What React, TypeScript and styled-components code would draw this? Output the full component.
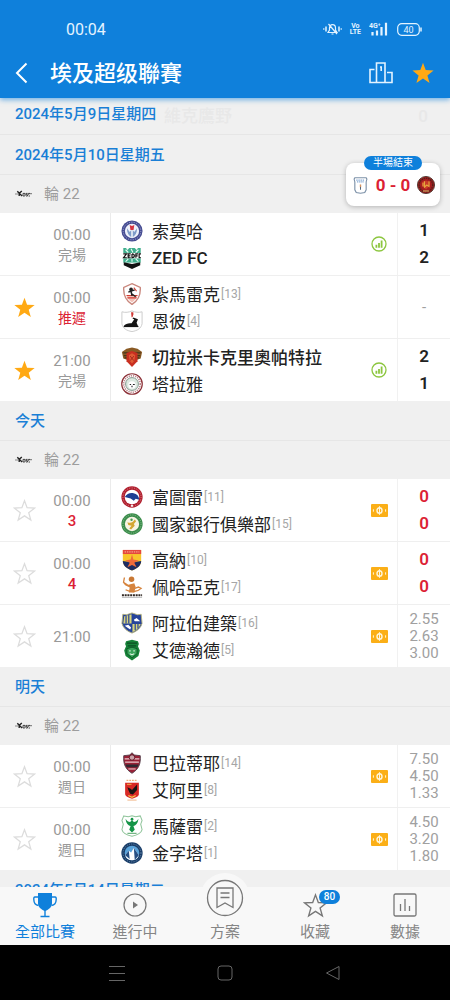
import React from "react";
import styled, { createGlobalStyle } from "styled-components";

const blue = "#0f80db";
const orange = "#ffa914";
const red = "#dc1f35";

const GlobalStyle = createGlobalStyle`
  *, *::before, *::after { box-sizing: border-box; }
  body {
    margin: 0;
    background: #f0f0f0;
    font-family: Roboto, "Noto Sans CJK TC", sans-serif;
    color: #222;
  }
  button {
    padding: 0;
    border: 0;
    background: none;
    font: inherit;
    color: inherit;
    cursor: pointer;
  }
  svg { display: block; flex: none; }
`;

const Screen = styled.div`
  display: flex;
  flex-direction: column;
  height: 100vh;
  background: #f0f0f0;
`;

const Header = styled.header`
  position: relative;
  z-index: 2;
  flex: none;
  background: ${blue};
  color: #fff;
  box-shadow: 0 2px 5px rgba(15, 128, 219, 0.55);
`;

const StatusBar = styled.div`
  display: flex;
  align-items: center;
  justify-content: space-between;
  height: 48px;
  padding: 10px 28px 0 66px;
  font-size: 16px;
  color: #e4f3ff;
`;

const StatusIcons = styled.div`
  display: flex;
  align-items: center;
  gap: 8px;
`;

const VoLte = styled.span`
  display: flex;
  flex-direction: column;
  align-items: center;
  font-size: 7px;
  font-weight: 700;
  line-height: 6px;
`;

const TitleBar = styled.div`
  display: flex;
  align-items: center;
  height: 50px;
  padding: 0 15px 0 14px;
`;

const Title = styled.h1`
  flex: 1;
  margin: 0 0 0 20px;
  padding-top: 2px;
  font-size: 22px;
  line-height: 30px;
  font-weight: 500;
`;

const IconButton = styled.button`
  display: flex;
  align-items: center;
  justify-content: center;
`;

const HeaderActions = styled.div`
  display: flex;
  align-items: center;
  gap: 18px;
`;

const Content = styled.main`
  position: relative;
  flex: 1;
  min-height: 0;
`;

const Scroller = styled.div`
  height: 100%;
  overflow-y: auto;
  scrollbar-width: none;
`;

const DateHeading = styled.h2<{ $pinned?: boolean }>`
  display: flex;
  align-items: center;
  height: ${(p) => (p.$pinned ? 37 : 40)}px;
  margin: 0;
  padding: ${(p) => (p.$pinned ? "0 15px 4px" : "1px 15px 0")};
  border-bottom: 1px solid #e6e6e6;
  font-size: 15px;
  line-height: 20px;
  font-weight: 500;
  color: #1a7fd6;
`;

const PinnedBar = styled.div`
  position: relative;
`;

const Faded = styled.div`
  position: absolute;
  inset: 6px 0 auto 164px;
  display: flex;
  justify-content: space-between;
  padding-right: 22px;
  font-size: 17px;
  line-height: 24px;
  font-weight: 500;
  color: #e8e8e8;
`;

const RoundRow = styled.div`
  display: flex;
  align-items: center;
  gap: 12px;
  height: 38px;
  padding: 0 15px;
  font-size: 15px;
  line-height: 20px;
  color: #9d9d9d;
`;

const MatchList = styled.ul`
  margin: 0;
  padding: 0;
  list-style: none;
  background: #fff;
`;

const MatchRow = styled.li`
  display: grid;
  grid-template-columns: 48px 63px minmax(0, 1fr) 36px 53px;
  min-height: 62px;
  & + & {
    min-height: 63px;
    border-top: 1px solid #efefef;
  }
`;

const Cell = styled.div`
  display: flex;
  flex-direction: column;
  align-items: center;
  justify-content: center;
`;

const TimeCell = styled(Cell)`
  padding: 2px 14px 0 0;
  border-right: 1px solid #ebebeb;
  font-size: 15px;
  line-height: 20px;
  color: #999;
`;

const State = styled.span<{ $tone?: "red" | "minute" }>`
  font-size: ${(p) => (p.$tone === "minute" ? 15 : 14)}px;
  font-weight: ${(p) => (p.$tone === "minute" ? 500 : 400)};
  color: ${(p) => (p.$tone ? red : "#999")};
`;

const Teams = styled.div`
  display: flex;
  flex-direction: column;
  justify-content: center;
  padding-left: 10px;
`;

const Team = styled.div<{ $winner?: boolean }>`
  display: flex;
  align-items: center;
  height: 27px;
  font-size: 17px;
  font-weight: ${(p) => (p.$winner ? 500 : 400)};
  white-space: nowrap;
`;

const TeamName = styled.span`
  margin-left: 9px;
`;

const Rank = styled.span`
  margin-left: 1px;
  font-size: 12px;
  font-weight: 400;
  color: #a6a6a6;
`;

const ResultCell = styled(Cell)`
  border-left: 1px solid #f1f1f1;
`;

const Goals = styled.span<{ $live?: boolean }>`
  font-size: 17px;
  line-height: 27px;
  font-weight: 600;
  color: ${(p) => (p.$live ? red : "#222")};
`;

const Odd = styled.span`
  font-size: 15px;
  line-height: 17px;
  color: #a0a0a0;
`;

const LiveCard = styled.aside`
  position: absolute;
  top: 65px;
  right: 10px;
  z-index: 1;
  display: flex;
  align-items: center;
  justify-content: space-between;
  width: 94px;
  height: 43px;
  padding: 1px 5px 0 6px;
  border-radius: 8px;
  background: #fff;
  box-shadow: 0 1px 5px rgba(0, 0, 0, 0.25);
  font-size: 17px;
  font-weight: 700;
  color: ${red};
  white-space: nowrap;
`;

const LivePill = styled.span`
  position: absolute;
  top: -7px;
  left: 18px;
  right: 18px;
  border-radius: 7px;
  background: ${blue};
  color: #fff;
  font-size: 10px;
  line-height: 14px;
  font-weight: 400;
  text-align: center;
`;

const TabBar = styled.nav`
  position: relative;
  z-index: 2;
  flex: none;
  display: grid;
  grid-template-columns: repeat(5, 1fr);
  height: 58px;
  background: #f8f8f8;
`;

const Tab = styled.button<{ $active?: boolean }>`
  position: relative;
  display: flex;
  flex-direction: column;
  align-items: center;
  justify-content: flex-end;
  gap: 3px;
  padding-bottom: 2px;
  font-size: 15px;
  line-height: 22px;
  color: ${(p) => (p.$active ? blue : "#858585")};
`;

const TabIcon = styled.span`
  display: flex;
  align-items: center;
  justify-content: center;
  height: 26px;
`;

const RaisedIcon = styled.span`
  position: absolute;
  top: -14px;
  left: 50%;
  margin-left: -25px;
  width: 50px;
  height: 50px;
  border-radius: 50%;
  background: #f8f8f8;
  display: flex;
  align-items: center;
  justify-content: center;
`;

const Badge = styled.span`
  position: absolute;
  top: 3px;
  left: 50%;
  margin-left: 4px;
  min-width: 21px;
  border-radius: 7px;
  background: ${blue};
  color: #fff;
  font-size: 10px;
  line-height: 14px;
  font-weight: 500;
  text-align: center;
`;

const SystemNav = styled.footer`
  flex: none;
  display: flex;
  align-items: center;
  justify-content: center;
  gap: 90px;
  height: 55px;
  background: #000;
`;

const STAR = "M12 1.8l2.700 7.300 7.900.4-6.200 4.900 2.200 7.500-6.600-4.300-6.600 4.300 2.200-7.500-6.200-4.900 7.900-.4z";

const Star = ({ on, size = 23, stroke = "#dcdcdc" }: { on?: boolean; size?: number; stroke?: string }) => (
  <svg width={size} height={size} viewBox="0 0 24 24">
    <path d={STAR} fill={on ? orange : "none"} stroke={on ? "none" : stroke} strokeWidth="1.3" />
  </svg>
);

const ChartIcon = () => (
  <svg width="16" height="16" viewBox="0 0 16 16">
    <circle cx="8" cy="8" r="7" fill="none" stroke="#8cc63f" strokeWidth="1.3" />
    <path d="M5.4 8.800v3M8 7v4.800M10.600 4.400v7.400" stroke="#8cc63f" strokeWidth="1.800" />
  </svg>
);

const BillIcon = () => (
  <svg width="17" height="13" viewBox="0 0 17 13">
    <rect width="17" height="13" rx="1" fill="#fbaf17" />
    <ellipse cx="8.5" cy="6.5" rx="2.5" ry="2.8" fill="none" stroke="#fff6dc" strokeWidth="1.4" />
    <path d="M8.5 2.2v8.600M2.400 5.300v2.400M14.600 5.300v2.400" stroke="#fff6dc" strokeWidth="1" />
  </svg>
);

const LeagueMark = () => (
  <svg width="17" height="10" viewBox="0 0 17 10">
    <path d="M0 5h3.200M13.500 4.600H17" stroke="#888" strokeWidth="1.100" />
    <path d="M2.300 2.200l2 2L6.800 2M4.200 3.400v3.600M4.600 4.800l2.600 2.200" fill="none" stroke="#222" strokeWidth="1.400" />
    <path d="M10 7V4.400H8V7h1.800M12.600 4.400H11v1.300h1.500V7H11M15 4.400h-1.500v1.300M13.600 7H15" fill="none" stroke="#444" strokeWidth="1" />
  </svg>
);

const crests: Record<string, React.ReactNode> = {
  smouha: (
    <>
      <circle cx="12" cy="12" r="11.5" fill="#454b91" />
      <circle cx="12" cy="12" r="9.600" fill="none" stroke="#a9afd6" strokeWidth="1" strokeDasharray="1.2 1.4" />
      <circle cx="12" cy="12" r="7.8" fill="#eef1fa" />
      <path d="M6.500 9c0 5 1.800 8.500 5.500 10 3.700-1.500 5.500-5 5.500-10l-3 4-2.500-3-2.500 3z" fill="#7f9cc9" />
      <path d="M12 9v10" stroke="#fff" strokeWidth="1.500" />
      <path d="M9.500 5.500l2.500 1 2.500-1-.8 5.500h-3.400z" fill="#d63542" />
    </>
  ),
  zed: (
    <>
      <path d="M2.500 1h3l1.500 2.400L9 1h6l2 2.400L18.500 1h3v6h-19z" fill="#3fae8c" />
      <path d="M2.500 12h19v5h-19z" fill="#3fae8c" />
      <path d="M5 3l3 3M11 2l2 4M19 3l-3 3M5 16l3-3M12 16v-3M19 16l-3-3" stroke="#e9fff7" strokeWidth="1.200" />
      <path d="M2 6.500h20v6H2z" fill="#fff" />
      <path d="M2.500 7.500H6l-3.200 4.200h3.600M10.600 7.500H7.800v4.200h2.800M7.800 9.600h2.400M12 7.500v4.200c3.400 0 3.400-4.200 0-4.200M18.600 7.500h-2.400v4.200M16.200 9.600h2M21.800 7.500h-2v4.200h2" fill="none" stroke="#111" strokeWidth="1.300" />
      <path d="M3 16.500l9 2 9-2V20l-9 4-9-4z" fill="#111" />
    </>
  ),
  zamalek: (
    <>
      <path d="M12 .8l9 4c.6 8-2.400 14.600-9 18.600C5.400 19.400 2.400 12.800 3 4.800z" fill="#fff" stroke="#c9877d" strokeWidth="1.500" />
      <path d="M6 14h12c-1 3-3.400 5.600-6 7.200C9.400 19.600 7 17 6 14z" fill="#f2c2b8" />
      <path d="M6 13.600h12M7 16.200h10" stroke="#d23a30" strokeWidth="1.200" />
      <circle cx="11" cy="7" r="2" fill="#222" />
      <path d="M8 10l7-2.500M11 9l1 5M12 12l4 3" stroke="#222" strokeWidth="1.600" />
      <path d="M14 5l3 4" stroke="#cf4036" strokeWidth="1.200" />
    </>
  ),
  enppi: (
    <>
      <path d="M1 2c4 1 7.500.6 11-1 3.500 1.600 7 2 11 1v13c-1 5-5 7.600-11 8.500C6 22.600 2 20 1 15z" fill="#fff" stroke="#c8c8c8" strokeWidth="1" />
      <path d="M11 2.500h2.500v2.500l-1 3h-1z" fill="#d13a36" />
      <path d="M3 17.500c2-2.500 5-3.500 8.500-3l3-4.500-2-.5 1-1.200 5 1.700-1.500 4 1.500 3.500z" fill="#151515" />
      <path d="M3 18h16" stroke="#151515" strokeWidth="1.300" />
    </>
  ),
  cleopatra: (
    <>
      <path d="M1 6.500l5-3.500 6-1.500L18 3l5 3.500-1.500 7-5.500 2H8l-5.500-2z" fill="#8a5a24" />
      <path d="M2.500 7.500h19M3 10.500h18M4 13h16" stroke="#46351d" strokeWidth="1.200" />
      <path d="M6 7.500l6-2 6 2v9L12 23l-6-6.500z" fill="#c92f21" />
      <path d="M8.500 10l3.500-2 3.500 2-1 6-2.500 3-2.500-3z" fill="#e05a34" />
      <path d="M10 11l4 5M14 11l-4 5" stroke="#a3261b" strokeWidth="1" />
    </>
  ),
  talaea: (
    <>
      <circle cx="12" cy="12" r="11.200" fill="#fff" stroke="#8b2f36" strokeWidth="1.300" />
      <circle cx="12" cy="12" r="9" fill="none" stroke="#b98488" strokeWidth="1.800" strokeDasharray="1.300 1.100" />
      <circle cx="12" cy="12" r="7" fill="#dce9e0" stroke="#7b8f85" strokeWidth="1" />
      <circle cx="12" cy="13" r="4" fill="#fff" />
      <path d="M9.500 12.500h1.500M13 12.500h2M12 14v1.500" stroke="#222" strokeWidth="1.200" fill="none" />
    </>
  ),
  future: (
    <>
      <circle cx="12" cy="12" r="11.600" fill="#b01f2e" />
      <circle cx="12" cy="12" r="9.900" fill="none" stroke="#dd8a92" strokeWidth="1" strokeDasharray="1.200 1.500" />
      <circle cx="12" cy="12" r="8" fill="#fff" />
      <path d="M4.200 12c2-3.500 5.800-4.800 9.500-4 3.500.7 6 3 6.200 7l-3.900-1-2 2-3.500-2.500z" fill="#1e3f93" />
      <path d="M11 20.500h2v2h-2z" fill="#fff" />
    </>
  ),
  bank: (
    <>
      <circle cx="12" cy="12" r="11.600" fill="#3a8c4a" />
      <circle cx="12" cy="12" r="9.900" fill="none" stroke="#8fc297" strokeWidth="1" strokeDasharray="1.200 1.400" />
      <circle cx="12" cy="12" r="7.800" fill="#f7f4e4" />
      <path d="M7 10c2 1 4 1 6-.5L15 7l1.500 2-2.500 3 1 2-4 4-2-1 2.500-3L8 13z" fill="#d3a632" />
      <circle cx="11.500" cy="7.300" r="1.300" fill="#4a9a52" />
    </>
  ),
  gouna: (
    <>
      <path d="M2 1h20v12c0 5-4 8-10 10.500C6 21 2 18 2 13z" fill="#f8c62b" />
      <path d="M2 1h20v4.500H2z" fill="#e5483d" />
      <path d="M2 13l5 1 5-2 5 2 5-1c0 5-4 8-10 10.500C6 21 2 18 2 13z" fill="#1d2c62" />
      <path d="M12 6l1.500 5.500 6 1-5 2.500 2.500 5L12 17.500 7 20l2.500-5-5-2.500 6-1z" fill="#ef6b3a" />
      <path d="M4 3.200h16" stroke="#f7c4a5" strokeWidth="1" strokeDasharray="1.500 1" />
    </>
  ),
  pharco: (
    <>
      <circle cx="11.500" cy="3.500" r="3" fill="#c97834" />
      <path d="M4.500 1.500l-1 5L8 9.500 14.500 8l1.500 4-1.500 6H8.500l1-5.500-5-2.500L2 7l1-5.500z" fill="#d6843e" />
      <path d="M5 15c6 3 13 2.500 17-1.500l-3-1.500-4 1.500" fill="none" stroke="#d6843e" strokeWidth="1.500" />
      <path d="M1 21h22" stroke="#332a25" strokeWidth="2.200" strokeDasharray="2.200 .8" />
      <path d="M1 23.500h22" stroke="#aaa" strokeWidth=".8" />
    </>
  ),
  arab: (
    <>
      <path d="M2 2.500l4 .5 6-2 6 2 4-.5 1 10c-1.500 5-5.500 8.500-11 10.500C6.500 21 2.500 17.500 1 12.500z" fill="#26439a" stroke="#b6b27b" strokeWidth="1" />
      <path d="M3.500 4.500l8-2v10h-9zM12.500 13h9c-1.500 4-4.500 7-9 9z" fill="#d8d37c" />
      <path d="M5.500 4v8.500M8.500 3v9.500M15.500 13v7M18.500 13v5" stroke="#26439a" strokeWidth="1.300" />
      <path d="M14 8.500l3-2 4 3.500h-6zM4 15l4-1 3 3-1 2z" fill="#fff" />
    </>
  ),
  ittihad: (
    <>
      <path d="M5.500 2.500L12 .8l6.500 1.700 1 3-1 2.500 2 4.500-1.500 6-7 5-7-5-1.500-6 2-4.500-1-2.500z" fill="#168238" />
      <path d="M6.500 4.500h11M7.500 7.500h9" stroke="#0d4f22" strokeWidth="1.600" />
      <path d="M6.500 10.500l5.500-1.500 5.500 1.500v5.500L12 20.500 6.500 16z" fill="#39a45a" stroke="#0d5a26" strokeWidth="1" />
      <path d="M9 13h1.500M13.500 13H15M9.500 16c1.600 1.300 3.400 1.300 5 0" stroke="#e1f3e4" strokeWidth="1.200" fill="none" />
    </>
  ),
  baladiyat: (
    <>
      <path d="M12 .8l2.500 2.500L21 4c.8 9-2 15-9 19.200C5 19 2.200 13 3 4l6.500-.7z" fill="#9a2036" stroke="#54404a" strokeWidth="1" />
      <path d="M4 7.500h16M4.500 11h15" stroke="#e9c9cd" strokeWidth="1.300" />
      <circle cx="12" cy="6" r="3" fill="#c9a3a9" stroke="#5c1020" strokeWidth="1" />
      <path d="M4.800 13.500h14.400l-1.400 3H6.200z" fill="#2d2831" />
      <path d="M8 18.500h8" stroke="#e7bcc1" strokeWidth="1.300" />
    </>
  ),
  ahly: (
    <>
      <path d="M6 1.500h12" stroke="#efb27c" strokeWidth="1.500" strokeDasharray="2 1" />
      <path d="M4.500 4h15v12.500c0 2-3 3.500-7.500 5-4.500-1.500-7.500-3-7.500-5z" fill="#d82a26" />
      <path d="M7 9l3.500 1.500L12 12l5.500-6v6L13 17l-3-1-2-4z" fill="#1c1614" />
      <path d="M8 18l4 2 4-2" stroke="#f4c64b" strokeWidth="1.300" fill="none" />
      <path d="M6.500 5.800h5" stroke="#f4c64b" strokeWidth="1" />
      <path d="M7 23h10" stroke="#f0b07d" strokeWidth="1" />
    </>
  ),
  masry: (
    <>
      <path d="M3 1l5 1 4-1.200L16 2l5-1 2 5-1.500 4L23 16c-1 4-5 6-11 7.200C6 22 2 20 1 16l1.500-6L1 6z" fill="#fff" stroke="#8fc49a" strokeWidth="1.100" />
      <path d="M5 4c.5 5 2.500 7 5.500 8L9 16l3 3 3-3-1.500-4c3-1 5-3 5.500-8-1.500 2.500-3 3.500-5 3.500L12 5.500 10 7.500C8 7.500 6.500 6.500 5 4z" fill="#159447" />
      <circle cx="12" cy="4.500" r="1.500" fill="#159447" />
      <path d="M7 20h10" stroke="#63ad75" strokeWidth="1.200" />
    </>
  ),
  pyramids: (
    <>
      <circle cx="12" cy="12" r="11.600" fill="#193d68" />
      <circle cx="12" cy="12" r="9.800" fill="none" stroke="#6f8fb2" strokeWidth="1" strokeDasharray="1.100 1.400" />
      <circle cx="12" cy="12" r="8" fill="#5aa3da" />
      <path d="M4.500 14.500l4-5 2.500 2 3-5 5.500 8c-1 3.500-4 5.500-7.500 5.500s-6.500-2-7.500-5.500z" fill="#fff" />
      <path d="M8.500 9.500l1 9-5-4zM14 6.500l1 13 4.500-5z" fill="#264f83" />
    </>
  ),
  livehome: (
    <>
      <path d="M4 1h16l1 2-1 4v11l-2 4-6 1-6-1-2-4V7L3 3z" fill="#fff" stroke="#7c91a8" strokeWidth="1.600" />
      <path d="M6 4.500h12M7 7h10" stroke="#85a9d4" strokeWidth="1.700" strokeDasharray="2 1" />
      <path d="M12 10.500v4" stroke="#d79560" strokeWidth="2" />
      <path d="M12 14v4" stroke="#55677c" strokeWidth="1.500" />
    </>
  ),
  liveaway: (
    <>
      <circle cx="12" cy="12" r="11.400" fill="#a51d20" stroke="#47362c" strokeWidth="1.200" />
      <circle cx="12" cy="12" r="9" fill="none" stroke="#562019" strokeWidth="2" strokeDasharray="2 1" />
      <path d="M7 8l5-2 5 2v5l-5 5-5-5z" fill="#c93a28" />
      <path d="M10 7v8l3-3 3 2V7M8 9v5" fill="none" stroke="#e5a63d" strokeWidth="1.500" />
      <path d="M8 20h8" stroke="#d7ad62" strokeWidth="1.500" />
    </>
  ),
};

const Crest = ({ id, size = 22 }: { id: string; size?: number }) => (
  <svg width={size} height={size} viewBox="0 0 24 24">
    {crests[id]}
  </svg>
);

type Side = { crest: string; name: string; rank?: number; winner?: boolean };
type Match = {
  time: string;
  state?: string;
  tone?: "red" | "minute";
  star?: "on" | "off";
  sides: [Side, Side];
  extra?: "chart" | "bill";
  goals?: number[];
  live?: boolean;
  odds?: string[];
};

const days: { date: string; matches: Match[] }[] = [
  {
    date: "2024年5月10日星期五",
    matches: [
      { time: "00:00", state: "完場", sides: [{ crest: "smouha", name: "索莫哈" }, { crest: "zed", name: "ZED FC", winner: true }], extra: "chart", goals: [1, 2] },
      { time: "00:00", state: "推遲", tone: "red", star: "on", sides: [{ crest: "zamalek", name: "紮馬雷克", rank: 13 }, { crest: "enppi", name: "恩彼", rank: 4 }] },
      { time: "21:00", state: "完場", star: "on", sides: [{ crest: "cleopatra", name: "切拉米卡克里奧帕特拉", winner: true }, { crest: "talaea", name: "塔拉雅" }], extra: "chart", goals: [2, 1] },
    ],
  },
  {
    date: "今天",
    matches: [
      { time: "00:00", state: "3", tone: "minute", star: "off", sides: [{ crest: "future", name: "富圖雷", rank: 11 }, { crest: "bank", name: "國家銀行俱樂部", rank: 15 }], extra: "bill", goals: [0, 0], live: true },
      { time: "00:00", state: "4", tone: "minute", star: "off", sides: [{ crest: "gouna", name: "高納", rank: 10 }, { crest: "pharco", name: "佩哈亞克", rank: 17 }], extra: "bill", goals: [0, 0], live: true },
      { time: "21:00", star: "off", sides: [{ crest: "arab", name: "阿拉伯建築", rank: 16 }, { crest: "ittihad", name: "艾德瀚德", rank: 5 }], extra: "bill", odds: ["2.55", "2.63", "3.00"] },
    ],
  },
  {
    date: "明天",
    matches: [
      { time: "00:00", state: "週日", star: "off", sides: [{ crest: "baladiyat", name: "巴拉蒂耶", rank: 14 }, { crest: "ahly", name: "艾阿里", rank: 8 }], extra: "bill", odds: ["7.50", "4.50", "1.33"] },
      { time: "00:00", state: "週日", star: "off", sides: [{ crest: "masry", name: "馬薩雷", rank: 2 }, { crest: "pyramids", name: "金字塔", rank: 1 }], extra: "bill", odds: ["4.50", "3.20", "1.80"] },
    ],
  },
];

const MatchItem = ({ match }: { match: Match }) => (
  <MatchRow>
    <Cell>
      {match.star && (
        <IconButton type="button" aria-label="收藏" aria-pressed={match.star === "on"}>
          <Star on={match.star === "on"} />
        </IconButton>
      )}
    </Cell>
    <TimeCell>
      <span>{match.time}</span>
      {match.state && <State $tone={match.tone}>{match.state}</State>}
    </TimeCell>
    <Teams>
      {match.sides.map((s) => (
        <Team key={s.name} $winner={s.winner}>
          <Crest id={s.crest} />
          <TeamName>{s.name}</TeamName>
          {s.rank && <Rank>[{s.rank}]</Rank>}
        </Team>
      ))}
    </Teams>
    <Cell>
      {match.extra === "chart" && <ChartIcon />}
      {match.extra === "bill" && <BillIcon />}
    </Cell>
    <ResultCell>
      {match.goals?.map((g, i) => (
        <Goals key={i} $live={match.live}>{g}</Goals>
      ))}
      {match.odds?.map((o) => <Odd key={o}>{o}</Odd>)}
      {!match.goals && !match.odds && <Odd>-</Odd>}
    </ResultCell>
  </MatchRow>
);

export default function App() {
  return (
    <Screen>
      <GlobalStyle />
      <Header>
        <StatusBar>
          <span>00:04</span>
          <StatusIcons>
            <svg width="19" height="12" viewBox="0 0 19 12" fill="none" stroke="currentColor" strokeWidth="1.200">
              <path d="M5 9.500h9L12.500 7V5c0-2-1-3.300-3-3.300S6.500 3 6.500 5v2zM8.500 11h2M5.500 1l8.500 10" />
              <path d="M3 3.500v5M16 3.500v5" strokeWidth="1.500" />
              <path d="M.8 5.200v1.600M18.200 5.200v1.600" />
            </svg>
            <VoLte><span>Vo</span><span>LTE</span></VoLte>
            <svg width="20" height="14" viewBox="0 0 20 14">
              <text x="0" y="6" fontSize="7" fontWeight="700" fill="currentColor">4G⁺</text>
              <path d="M3.500 10v3.500M8 8.500v5M12.500 5v8.500M17 .8v12.700" stroke="currentColor" strokeWidth="2.200" />
            </svg>
            <svg width="25" height="13" viewBox="0 0 25 13">
              <rect x=".7" y=".7" width="21.600" height="11.600" rx="4" fill="none" stroke="currentColor" strokeWidth="1.200" />
              <path d="M24 4.500v4" stroke="currentColor" strokeWidth="1.500" />
              <text x="11.500" y="9.600" fontSize="9" textAnchor="middle" fill="currentColor">40</text>
            </svg>
          </StatusIcons>
        </StatusBar>
        <TitleBar>
          <IconButton type="button" aria-label="返回">
            <svg width="16" height="24" viewBox="0 0 16 24">
              <path d="M12.500 2.500L3 12l9.500 9.500" fill="none" stroke="#fff" strokeWidth="2" />
            </svg>
          </IconButton>
          <Title>埃及超级聯賽</Title>
          <HeaderActions>
            <IconButton type="button" aria-label="排名">
              <svg width="24" height="22" viewBox="0 0 24 22" fill="none" stroke="#e4f3ff" strokeWidth="1.600">
                <path d="M7.500 20.500V1h8.500v19.500M5.500 7.500H1v13h22V10.500h-5M11 5h1.200v4" />
              </svg>
            </IconButton>
            <IconButton type="button" aria-label="收藏聯賽" aria-pressed="true">
              <Star on size={24} />
            </IconButton>
          </HeaderActions>
        </TitleBar>
      </Header>

      <Content>
        <Scroller>
          <PinnedBar>
            <Faded aria-hidden="true">
              <span>維克鷹野</span>
              <span>0</span>
            </Faded>
            <DateHeading $pinned>2024年5月9日星期四</DateHeading>
          </PinnedBar>
          {days.map((day) => (
            <section key={day.date}>
              <DateHeading>{day.date}</DateHeading>
              <RoundRow>
                <LeagueMark />
                <span>輪 22</span>
              </RoundRow>
              <MatchList>
                {day.matches.map((m, i) => <MatchItem key={i} match={m} />)}
              </MatchList>
            </section>
          ))}
          <DateHeading>2024年5月14日星期二</DateHeading>
        </Scroller>
        <LiveCard>
          <LivePill>半場結束</LivePill>
          <Crest id="livehome" size={17} />
          <span>0 - 0</span>
          <Crest id="liveaway" size={18} />
        </LiveCard>
      </Content>

      <TabBar>
        <Tab type="button" $active>
          <TabIcon>
            <svg width="24" height="26" viewBox="0 0 24 26">
              <path d="M5 1h14v10c0 4-3 6.500-7 8-4-1.500-7-4-7-8z" fill={blue} />
              <path d="M5 5H2C.8 5 .7 6 .8 7.500.9 11 2 13 5.500 13.500M19 5h3c1.200 0 1.300 1 1.200 2.500-.1 3.500-1.200 5.500-4.700 6M12 18v6M7.500 24.500h9" fill="none" stroke={blue} strokeWidth="1.400" />
            </svg>
          </TabIcon>
          全部比賽
        </Tab>
        <Tab type="button">
          <TabIcon>
            <svg width="24" height="24" viewBox="0 0 24 24">
              <circle cx="12" cy="12" r="11" fill="none" stroke="#777" strokeWidth="1.200" />
              <path d="M10 8.500v7l5-3.500z" fill="#777" />
            </svg>
          </TabIcon>
          進行中
        </Tab>
        <Tab type="button">
          <RaisedIcon>
            <svg width="38" height="38" viewBox="0 0 38 38" fill="none" stroke="#777" strokeWidth="1.300">
              <circle cx="19" cy="19" r="17.500" />
              <path d="M11 9h16v19.500l-8-4.500-8 4.500zM14.500 14h9M14.500 18.500h9" />
            </svg>
          </RaisedIcon>
          方案
        </Tab>
        <Tab type="button">
          <TabIcon><Star size={25} stroke="#777" /></TabIcon>
          <Badge>80</Badge>
          收藏
        </Tab>
        <Tab type="button">
          <TabIcon>
            <svg width="24" height="24" viewBox="0 0 24 24" fill="none" stroke="#777" strokeWidth="1.300">
              <rect x="1" y="1" width="22" height="22" rx="1.500" />
              <path d="M7.500 11v7M12 6v12M16.500 13v5" />
            </svg>
          </TabIcon>
          數據
        </Tab>
      </TabBar>

      <SystemNav>
        <IconButton type="button" aria-label="選單">
          <svg width="18" height="18" viewBox="0 0 18 18" stroke="#666" strokeWidth="1">
            <path d="M1 2.500h16M1 9.500h16M1 16.500h16" />
          </svg>
        </IconButton>
        <IconButton type="button" aria-label="主畫面">
          <svg width="18" height="18" viewBox="0 0 18 18">
            <rect x="2" y="2" width="14" height="14" rx="3" fill="none" stroke="#666" />
          </svg>
        </IconButton>
        <IconButton type="button" aria-label="上一頁">
          <svg width="18" height="18" viewBox="0 0 18 18">
            <path d="M15 2.500v13L2.500 9z" fill="none" stroke="#666" strokeLinejoin="round" />
          </svg>
        </IconButton>
      </SystemNav>
    </Screen>
  );
}
